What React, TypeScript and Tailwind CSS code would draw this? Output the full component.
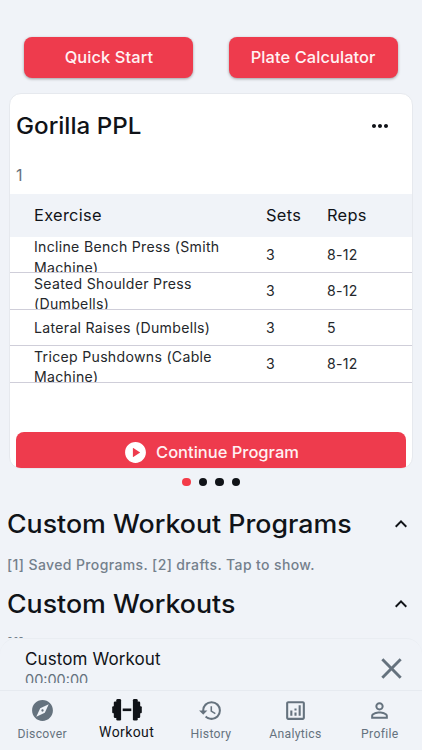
import {
  MdClose,
  MdExpandLess,
  MdExplore,
  MdHistory,
  MdMoreHoriz,
  MdOutlineAnalytics,
  MdPersonOutline,
  MdPlayCircle,
} from "react-icons/md";

const exercises = [
  { name: "Incline Bench Press (Smith Machine)", sets: "3", reps: "8-12" },
  { name: "Seated Shoulder Press (Dumbells)", sets: "3", reps: "8-12" },
  { name: "Lateral Raises (Dumbells)", sets: "3", reps: "5" },
  { name: "Tricep Pushdowns (Cable Machine)", sets: "3", reps: "8-12" },
];

function DumbbellIcon() {
  return (
    <svg className="h-6 w-8" viewBox="0 0 32 24" fill="currentColor">
      <rect x="1.2" y="8.2" width="3" height="7" rx="1" />
      <rect x="2.8" y="3.4" width="4" height="16.6" rx="1.3" />
      <rect x="5.3" y="1" width="4.8" height="21.6" rx="1.3" />
      <rect x="11.7" y="10.5" width="8.6" height="2.6" />
      <rect x="21.9" y="1" width="4.8" height="21.6" rx="1.3" />
      <rect x="25.2" y="3.4" width="4" height="16.6" rx="1.3" />
      <rect x="27.8" y="8.2" width="3" height="7" rx="1" />
    </svg>
  );
}

function TopButton({ label }: { label: string }) {
  return (
    <button className="h-[41px] w-[169px] rounded-lg bg-[#ee3b4d] text-[16.4px] font-medium tracking-[0.1px] text-[#fff1f3] shadow-[0_1px_3px_rgba(0,0,0,0.35)]">
      {label}
    </button>
  );
}

function ProgramCard() {
  return (
    <section className="mx-[9px] mt-[15px] h-[375.5px] overflow-hidden rounded-[12px] border border-[#e6e9ee] bg-white">
      <div className="flex h-[64px] items-center justify-between pl-[6px] pr-[20px]">
        <h2 className="origin-left scale-x-[1.05] text-[23px] font-medium">Gorilla PPL</h2>
        <MdMoreHoriz className="h-6 w-6" />
      </div>
      <p className="mt-[5px] h-[31px] pl-[6px] text-[16px] leading-[24px] text-[#65727e]">1</p>
      <div className="grid h-[42.5px] grid-cols-[232px_61px_1fr] items-center bg-[#f0f3f8] pl-6 text-[16.4px] tracking-[0.3px]">
        <span>Exercise</span>
        <span>Sets</span>
        <span>Reps</span>
      </div>
      {exercises.map((row) => (
        <div
          key={row.name}
          className="grid h-[36.6px] grid-cols-[232px_61px_1fr] grid-rows-[35.6px] [align-items:safe_center] overflow-hidden border-b border-[#cfced9] pt-[0.6px] pl-6 text-[14.1px] leading-[20.5px] tracking-[0.3px] text-[#24272b]"
        >
          <span className="w-[200px]">{row.name}</span>
          <span>{row.sets}</span>
          <span>{row.reps}</span>
        </div>
      ))}
      <button className="mx-[6px] mt-[49px] flex h-[41px] w-[390px] items-center justify-center gap-2 rounded-lg bg-[#ee3b4d] text-[16.5px] font-medium text-[#fff1f3]">
        <MdPlayCircle className="h-[25px] w-[25px] text-white" />
        Continue Program
      </button>
    </section>
  );
}

function SectionHeader({ title }: { title: string }) {
  return (
    <div className="flex h-[40px] items-center justify-between pl-[7px] pr-[9px]">
      <h2 className="origin-left scale-x-[1.07] pt-[2px] text-[25px] font-medium">{title}</h2>
      <MdExpandLess className="h-6 w-6" />
    </div>
  );
}

const tabs = [
  { label: "Discover", icon: <MdExplore /> },
  { label: "Workout", icon: <DumbbellIcon />, active: true },
  { label: "History", icon: <MdHistory /> },
  { label: "Analytics", icon: <MdOutlineAnalytics /> },
  { label: "Profile", icon: <MdPersonOutline /> },
];

export default function App() {
  return (
    <div className="flex h-[750px] w-[422px] flex-col overflow-hidden bg-[#f0f3f8] font-['Inter',sans-serif] text-[#101318]">
      <main className="h-[638px] shrink-0 overflow-hidden">
        <div className="flex justify-between px-[24.4px] pt-[37px]">
          <TopButton label="Quick Start" />
          <TopButton label="Plate Calculator" />
        </div>
        <ProgramCard />
        <div className="mt-[9px] flex justify-center gap-2">
          <span className="h-[8.5px] w-[8.5px] rounded-full bg-[#f43b48]" />
          <span className="h-[8.5px] w-[8.5px] rounded-full bg-[#101318]" />
          <span className="h-[8.5px] w-[8.5px] rounded-full bg-[#101318]" />
          <span className="h-[8.5px] w-[8.5px] rounded-full bg-[#101318]" />
        </div>
        <div className="mt-[18px]">
          <SectionHeader title="Custom Workout Programs" />
          <p className="flex h-[40px] items-center pl-[7px] text-[14px] font-medium tracking-[0.38px] text-[#74808c]">
            [1] Saved Programs. [2] drafts. Tap to show.
          </p>
          <SectionHeader title="Custom Workouts" />
          <p className="mt-[8px] pl-[7px] text-[14px] font-medium tracking-[0.38px] text-[#74808c]">[1]</p>
        </div>
      </main>
      <section className="flex h-[52px] shrink-0 justify-between rounded-t-[16px] border-t border-[#e9edf2] pl-[25px] pr-[13px]">
        <div className="h-[44px] overflow-hidden pt-[9px]">
          <p className="text-[17px] leading-[22px] tracking-[0.1px]">Custom Workout</p>
          <p className="text-[14.5px] leading-[20px] text-[#65727e]">00:00:00</p>
        </div>
        <MdClose className="mt-[12px] h-[35px] w-[35px] text-[#65727e]" />
      </section>
      <nav className="grid h-[60px] shrink-0 grid-cols-5 border-t border-[#e6eaf0] font-['Roboto',sans-serif]">
        {tabs.map((tab) => (
          <div
            key={tab.label}
            className={`flex flex-col items-center pt-[7px] ${tab.active ? "text-[#101318]" : "text-[#65727e]"}`}
          >
            <span className="flex h-6 items-center text-[25px]">{tab.icon}</span>
            <span className={tab.active ? "text-[14px] leading-5 tracking-[0.4px]" : "mt-[2px] text-[12.2px] leading-5 tracking-[0.3px]"}>
              {tab.label}
            </span>
          </div>
        ))}
      </nav>
    </div>
  );
}
